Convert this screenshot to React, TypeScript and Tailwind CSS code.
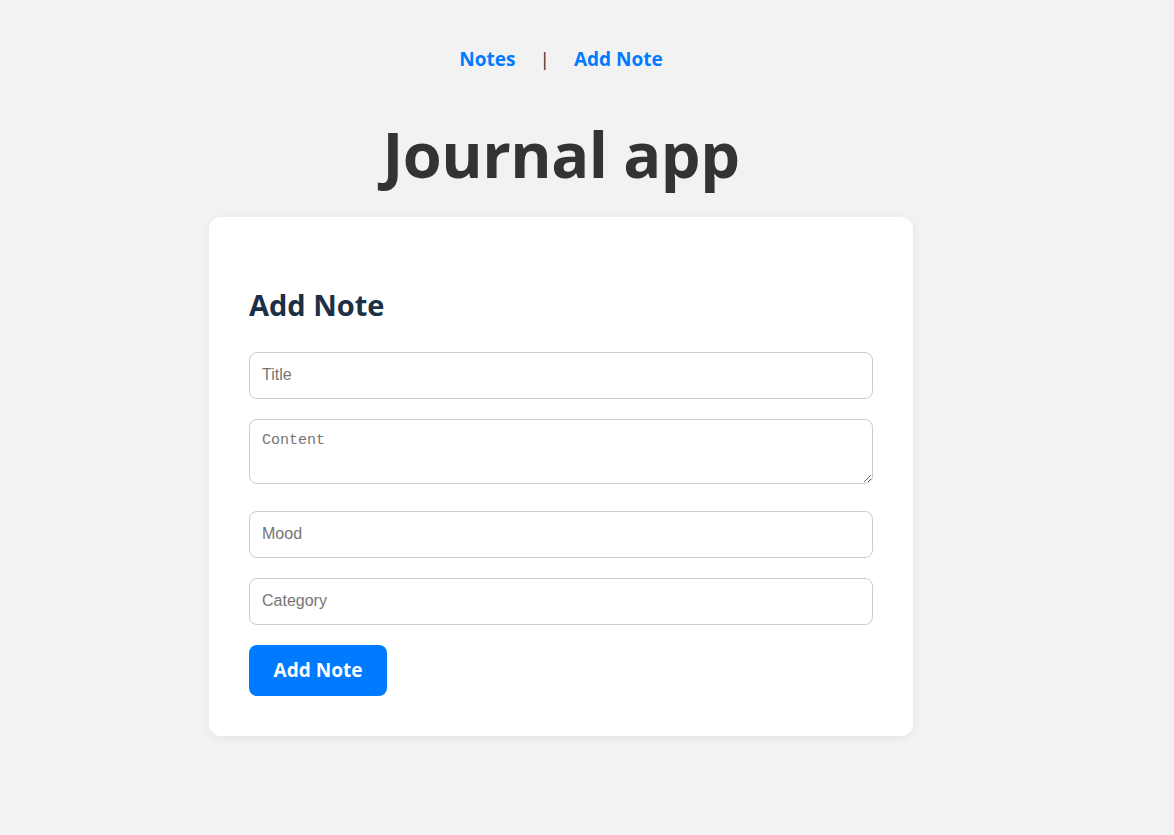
export default function App() {
  return (
    <div className="min-h-screen bg-[#f2f2f2] font-['Open_Sans',sans-serif]">
      <div className="w-[1122px] pb-10">
        <nav className="flex items-center justify-center gap-[24px] pt-[45px] text-[19px] font-bold">
          <a href="#" className="text-[#007bff]">Notes</a>
          <span className="font-normal text-[#333]">|</span>
          <a href="#" className="text-[#007bff]">Add Note</a>
        </nav>

        <h1 className="mt-[42px] text-center text-[63px] font-bold leading-[1.2] tracking-[-0.5px] text-[#333]">Journal app</h1>

        <div className="mx-auto mt-[26px] w-[704px] rounded-xl bg-white p-10 shadow-[0_2px_10px_rgba(0,0,0,0.06)]">
          <h2 className="mt-[31px] mb-[29px] text-[29px] font-bold leading-[1.2] text-[#1c2f45]">Add Note</h2>
          <form className="flex flex-col" onSubmit={(e) => e.preventDefault()}>
            <input
              type="text"
              placeholder="Title"
              className="h-[47px] w-full rounded-lg border border-[#ccc] px-3 font-['Liberation_Sans',sans-serif] text-base placeholder:text-[#757575] focus:outline-none"
            />
            <textarea
              placeholder="Content"
              className="mt-[20px] h-[65px] w-full rounded-lg border border-[#ccc] px-3 py-[12px] font-['Liberation_Mono',monospace] text-[15px] leading-[18px] placeholder:text-[#757575] focus:outline-none"
            />
            <input
              type="text"
              placeholder="Mood"
              className="mt-[27px] h-[47px] w-full rounded-lg border border-[#ccc] px-3 font-['Liberation_Sans',sans-serif] text-base placeholder:text-[#757575] focus:outline-none"
            />
            <input
              type="text"
              placeholder="Category"
              className="mt-[20px] h-[47px] w-full rounded-lg border border-[#ccc] px-3 font-['Liberation_Sans',sans-serif] text-base placeholder:text-[#757575] focus:outline-none"
            />
            <div className="mt-[20px]">
              <button
                type="submit"
                className="h-[51px] w-[138px] rounded-lg bg-[#007bff] text-[19px] font-bold text-white">
                Add Note
              </button>
            </div>
          </form>
        </div>
      </div>
    </div>
  );
}
